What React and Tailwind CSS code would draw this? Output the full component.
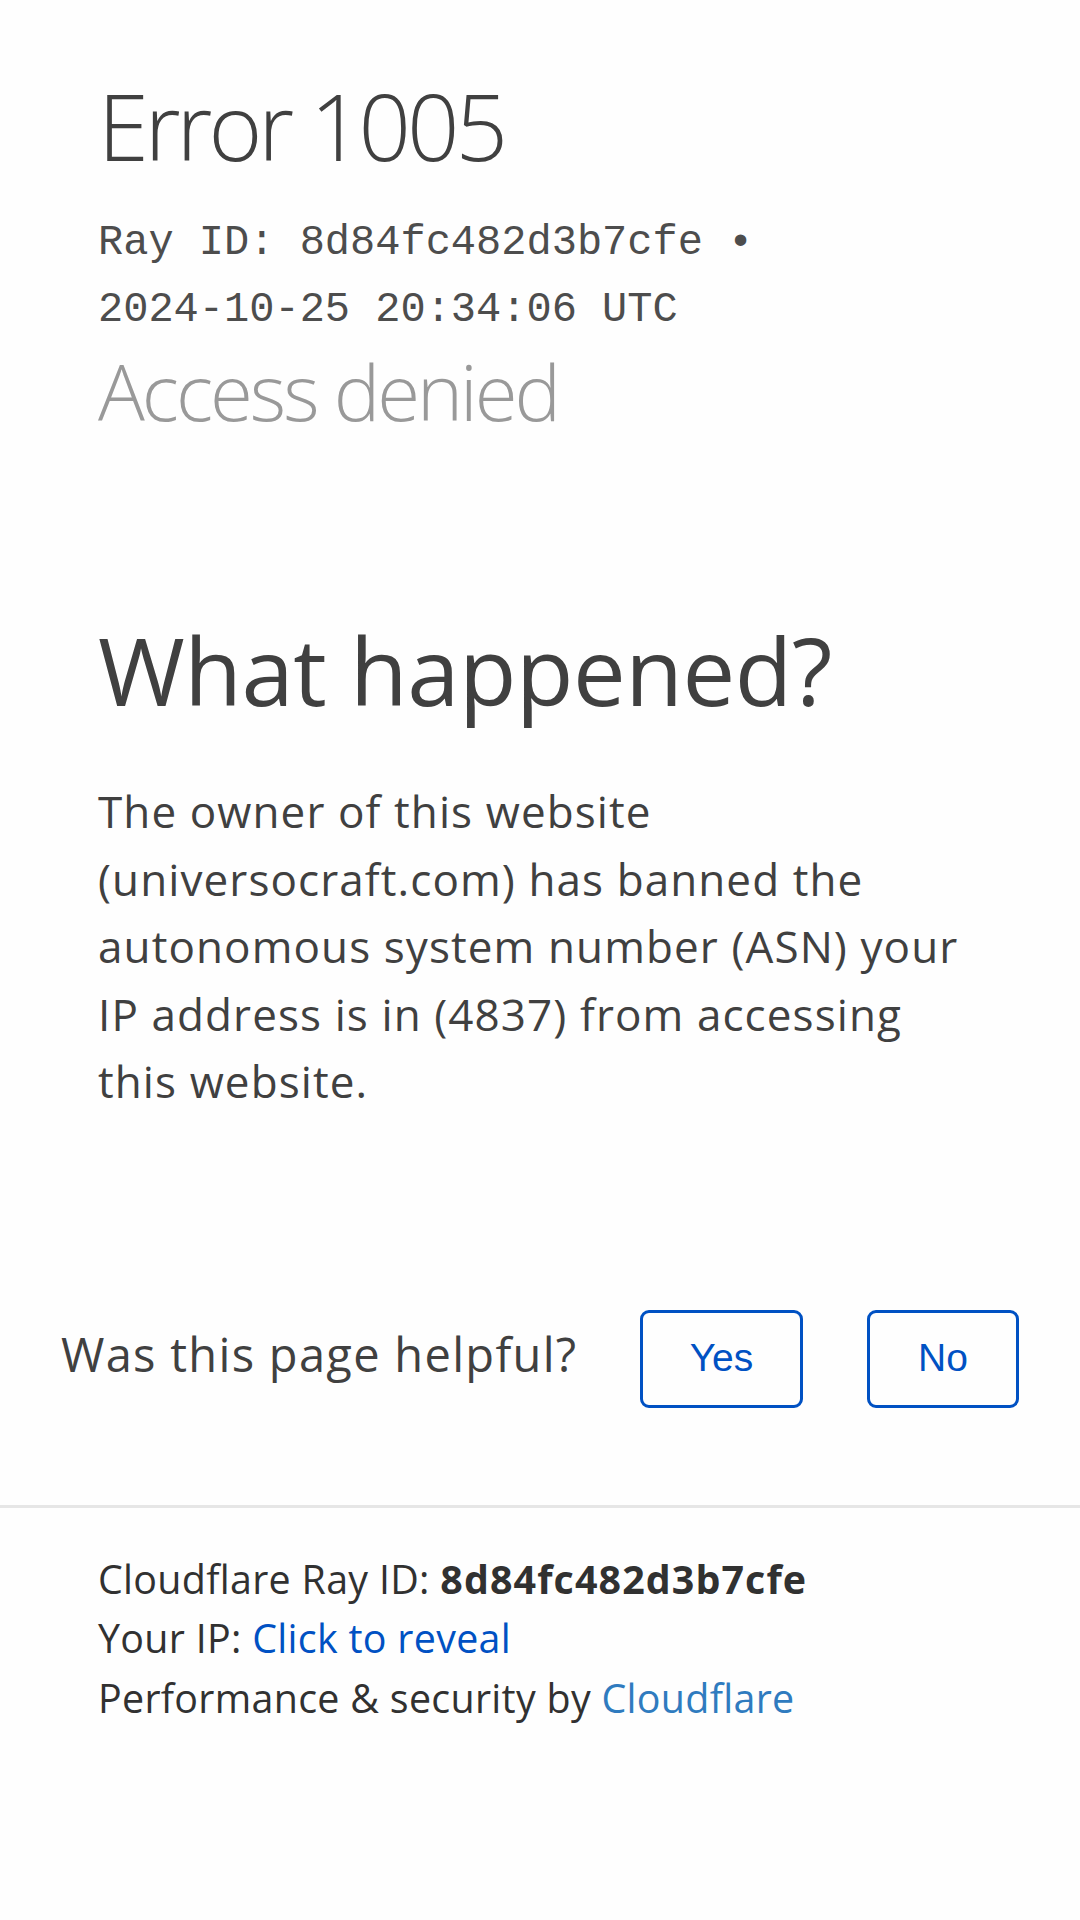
export default function App() {
  const sans = "font-['Open_Sans','Noto_Sans',sans-serif]";
  return (
    <div className={`min-h-[1920px] bg-[#fefefe] text-[#404040] ${sans}`}>
      <header className="px-[98px] pt-[79px]">
        <h1 className="text-[92px] leading-[94px] font-light tracking-[-4px]">Error 1005</h1>
        <div className="mt-[37px] font-['Liberation_Mono',monospace] text-[42px] leading-[67px] text-[#4d4d4d]">
          <span className="block">Ray ID: 8d84fc482d3b7cfe •</span>
          <span className="block">2024-10-25 20:34:06 UTC</span>
        </div>
        <h2 className="mt-[8px] text-[78px] leading-[78px] font-light text-[#999999] tracking-[-3px]">
          Access denied
        </h2>
      </header>

      <section className="px-[98px] mt-[193px]">
        <h2 className="text-[94px] leading-[94px] tracking-[-0.5px]">What happened?</h2>
        <p className="mt-[61px] text-[44px] leading-[67.5px] tracking-[1.1px]">
          The owner of this website
          <br />
          (universocraft.com) has banned the
          <br />
          autonomous system number (ASN) your
          <br />
          IP address is in (4837) from accessing
          <br />
          this website.
        </p>
      </section>

      <div className="mt-[194px] px-[61px] flex items-center justify-between">
        <span className="text-[47px] leading-[64px] pb-[10px] tracking-[1.3px]">Was this page helpful?</span>
        <div className="flex gap-[64px] font-['Liberation_Sans',Arial,sans-serif] text-[39px] text-[#0051c3]">
          <button className="w-[163px] h-[98px] border-[3px] border-[#0051c3] rounded-[9px] flex items-center justify-center">
            Yes
          </button>
          <button className="w-[152px] h-[98px] border-[3px] border-[#0051c3] rounded-[9px] flex items-center justify-center">
            No
          </button>
        </div>
      </div>

      <div className="mt-[97px] h-[3px] bg-[#e6e6e6]" />

      <footer className="px-[98px] pt-[42px] text-[39.4px] leading-[59.5px] text-[#313131] tracking-[0.3px]">
        <p>
          Cloudflare Ray ID: <span className="font-bold tracking-[1.1px]">8d84fc482d3b7cfe</span>
        </p>
        <p>
          Your IP: <a className="text-[#0051c3]">Click to reveal</a>
        </p>
        <p>
          Performance &amp; security by <a className="text-[#2f7bbf]">Cloudflare</a>
        </p>
      </footer>
    </div>
  );
}
